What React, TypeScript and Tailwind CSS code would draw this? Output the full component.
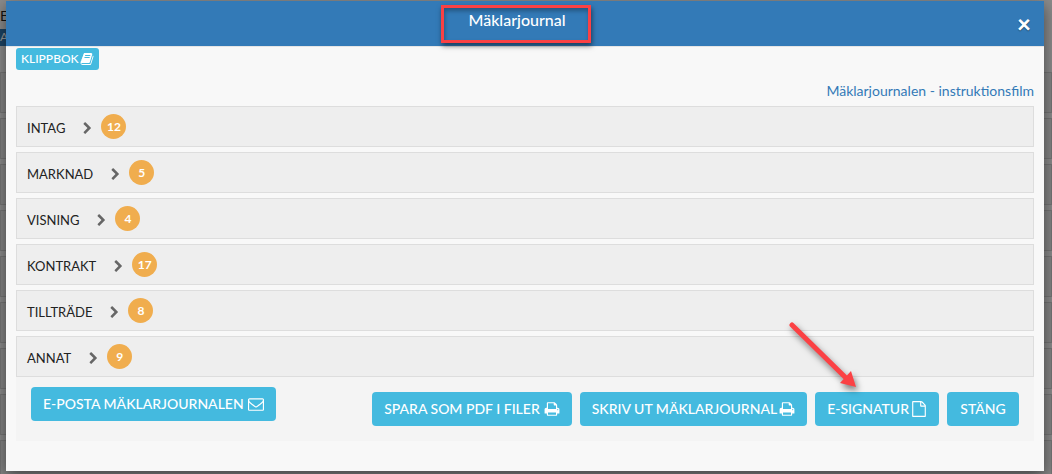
import React, { useState } from 'react';

const sections = [
  { id: 'intag', title: 'INTAG', count: 12 },
  { id: 'marknad', title: 'MARKNAD', count: 5 },
  { id: 'visning', title: 'VISNING', count: 4 },
  { id: 'kontrakt', title: 'KONTRAKT', count: 17 },
  { id: 'tilltrade', title: 'TILLTRÄDE', count: 8 },
  { id: 'annat', title: 'ANNAT', count: 9 },
];

const icons = {
  chevron: 'M1363 877l-742 742q-19 19-45 19t-45-19l-166-166q-19-19-19-45t19-45l531-531-531-531q-19-19-19-45t19-45l166-166q19-19 45-19t45 19l742 742q19 19 19 45t-19 45z',
  print: 'M448 1536h896v-256h-896v256zm0-640h896v-384h-160q-40 0-68-28t-28-68v-160h-640v640zm1152 64q0-26-19-45t-45-19-45 19-19 45 19 45 45 19 45-19 19-45zm128 0v416q0 13-9.5 22.5t-22.5 9.5h-224v160q0 40-28 68t-68 28h-960q-40 0-68-28t-28-68v-160h-224q-13 0-22.5-9.5t-9.5-22.5v-416q0-79 56.5-135.5t135.5-56.5h64v-544q0-40 28-68t68-28h672q40 0 88 20t76 48l152 152q28 28 48 76t20 88v256h64q79 0 135.5 56.5t56.5 135.5z',
  envelope: 'M1664 1504v-768q-32 36-69 66-268 206-426 338-51 43-83 67t-86.5 48.5-102.5 24.5h-2q-48 0-102.5-24.5t-86.5-48.5-83-67q-158-132-426-338-37-30-69-66v768q0 13 9.5 22.5t22.5 9.5h1472q13 0 22.5-9.5t9.5-22.5zm0-1051v-24.5l-.5-13-3-12.5-5.5-9-9-7.5-14-2.5h-1472q-13 0-22.5 9.5t-9.5 22.5q0 168 147 284 193 152 401 317 6 5 35 29.5t46 37.5 44.5 31.5 50.5 27.5 43 9h2q20 0 43-9t50.5-27.5 44.5-31.5 46-37.5 35-29.5q208-165 401-317 54-43 100.5-115.5t46.5-131.5zm128-37v1088q0 66-47 113t-113 47h-1472q-66 0-113-47t-47-113v-1088q0-66 47-113t113-47h1472q66 0 113 47t47 113z',
  file: 'M1596 380q28 28 48 76t20 88v1152q0 40-28 68t-68 28h-1344q-40 0-68-28t-28-68v-1600q0-40 28-68t68-28h896q40 0 88 20t76 48zm-444-244v376h376q-10-29-22-41l-313-313q-12-12-41-22zm384 1528v-1024h-416q-40 0-68-28t-28-68v-416h-768v1536h1280z',
  book: 'M1703 478q40 57 18 129l-275 906q-19 64-76.5 107.5t-122.5 43.5h-923q-77 0-148.5-53.5t-99.5-131.5q-24-67-2-127 0-4 3-27t4-37q1-8-3-21.5t-3-19.5q2-11 8-21t16.5-23.5 16.5-23.5q23-38 45-91.5t30-91.5q3-10 .5-30t-.5-28q3-11 17-28t17-23q21-36 42-92t25-90q1-9-2.5-32t.5-28q4-13 22-30.5t22-22.5q19-26 42.5-84.5t27.5-96.5q1-8-3-25.5t-2-26.5q2-8 9-18t18-23 17-21q8-12 16.5-30.5t15-35 16-36 19.5-32 26.5-23.5 36-11.5 47.5 5.5l-1 3q38-9 51-9h761q74 0 114 56t18 130l-274 906q-36 119-71.5 153.5t-128.5 34.5h-869q-27 0-38 15-11 16-1 43 24 70 144 70h923q29 0 56-15.5t35-41.5l300-987q7-22 5-57 38 15 59 43zm-1064 2q-4 13 2 22.5t20 9.5h608q13 0 25.5-9.5t16.5-22.5l21-64q4-13-2-22.5t-20-9.5h-608q-13 0-25.5 9.5t-16.5 22.5zm-83 256q-4 13 2 22.5t20 9.5h608q13 0 25.5-9.5t16.5-22.5l21-64q4-13-2-22.5t-20-9.5h-608q-13 0-25.5 9.5t-16.5 22.5z',
};

const Icon: React.FC<{ name: keyof typeof icons; className?: string }> = ({ name, className }) => (
  <svg viewBox="0 0 1792 1792" fill="currentColor" className={className} aria-hidden="true">
    <path d={icons[name]} />
  </svg>
);

const ActionButton: React.FC<{ children: React.ReactNode; onClick?: () => void }> = ({ children, onClick }) => (
  <button
    type="button"
    onClick={onClick}
    className="flex h-[34px] min-w-[72px] items-center justify-center rounded-[4px] bg-[#44badf] px-3 text-[14px] font-medium whitespace-nowrap text-white hover:bg-[#31a9ce]"
  >
    {children}
  </button>
);

// The page behind the modal, dimmed by the backdrop
const Backdrop: React.FC = () => (
  <div className="absolute inset-0 overflow-hidden bg-[#8b8b8b] text-[14px] text-[#111]" aria-hidden="true">
    <div className="h-[29px] pt-[6px]">E</div>
    <div className="h-[17px] w-20 bg-[#1c4364] text-[12px] leading-4 text-[#999]">AC</div>
    <div className="h-[26px]" />
    {[0, 1, 2, 3, 4, 5, 6, 7, 8].map(i => (
      <div key={i} className="mb-[5px] h-[41px] border border-[#767676] bg-[#858585]" />
    ))}
  </div>
);

export default function App() {
  const [open, setOpen] = useState<string | null>(null);

  return (
    <div className="relative min-h-screen font-['Lato',sans-serif] text-[14px] leading-5 text-[#222]">
      <Backdrop />
      <div className="relative pt-px pr-2 pb-[3px] pl-[6px]">
        <div role="dialog" aria-labelledby="modal-title" className="bg-[#f8f8f8] shadow-[0_5px_15px_rgba(0,0,0,0.5)]">
          <header className="flex h-[46px] items-center border-b border-[#e5e5e5] bg-[#337ab7] px-[13px] pt-px">
            <div className="flex flex-1 justify-center">
              {/* red frame drawn round the title */}
              <div className="h-[38px] border-[3px] border-[#fb4144] pt-[2px] pr-[22px] pl-6 shadow-[1px_3px_5px_rgba(0,0,0,0.5),inset_1px_3px_4px_rgba(0,0,0,0.3)]">
                <h1 id="modal-title" className="text-[16px] font-medium text-white">Mäklarjournal</h1>
              </div>
            </div>
            <button type="button" aria-label="Stäng fönstret" className="ml-1 text-[24px] font-black text-white text-shadow-[0_1px_1px_rgba(0,0,0,0.4)]">
              ×
            </button>
          </header>

          <div className="px-[10px] pt-px pb-[30px]">
            <button type="button" className="flex h-[22px] items-center gap-px rounded-[3px] bg-[#44badf] px-[5px] text-[12px] font-medium text-white">
              KLIPPBOK
              <Icon name="book" className="size-[14px]" />
            </button>
            <div className="mt-[11px] mb-[5px] text-right">
              <a href="#film" className="text-[#337ab7] hover:underline">Mäklarjournalen - instruktionsfilm</a>
            </div>

            <div className="flex flex-col gap-[5px]">
              {sections.map(s => (
                <button
                  key={s.id}
                  type="button"
                  aria-expanded={open === s.id}
                  onClick={() => setOpen(open === s.id ? null : s.id)}
                  className="flex h-[41px] w-full items-center border border-[#ddd] bg-[#eee] px-[10px] text-left"
                >
                  <span className="pt-[2px] text-[13px]">{s.title}</span>
                  <Icon name="chevron" className="mt-[3px] ml-4 size-[13px] text-[#666]" />
                  <span className="ml-[7px] flex size-[25px] items-center justify-center rounded-full bg-[#f0ad4e] text-[12px] font-bold text-white">
                    {s.count}
                  </span>
                </button>
              ))}
            </div>

            <footer className="relative flex items-start justify-between bg-[#f4f4f4] px-[15px] pt-[10px] pb-[15px]">
              <ActionButton>
                E-POSTA MÄKLARJOURNALEN <Icon name="envelope" className="ml-1 size-4" />
              </ActionButton>
              <div className="flex gap-2 pt-[5px]">
                <ActionButton>
                  SPARA SOM PDF I FILER <Icon name="print" className="ml-1 size-4" />
                </ActionButton>
                <ActionButton>
                  SKRIV UT MÄKLARJOURNAL <Icon name="print" className="ml-[2px] size-4" />
                </ActionButton>
                <ActionButton>
                  E-SIGNATUR <Icon name="file" className="ml-[2px] size-4" />
                </ActionButton>
                <ActionButton>STÄNG</ActionButton>
              </div>
              {/* arrow that points at E-SIGNATUR */}
              <svg className="pointer-events-none absolute right-[170px] bottom-[48px] h-[76px] w-[80px] drop-shadow-[2px_4px_3px_rgba(0,0,0,0.5)]" viewBox="0 0 80 76">
                <path d="M8 8 L61 60" stroke="#fb4144" strokeWidth="5" strokeLinecap="round" />
                <path d="M72 70 L56 66 L67 54 Z" fill="#fb4144" />
              </svg>
            </footer>
          </div>
        </div>
      </div>
    </div>
  );
}
